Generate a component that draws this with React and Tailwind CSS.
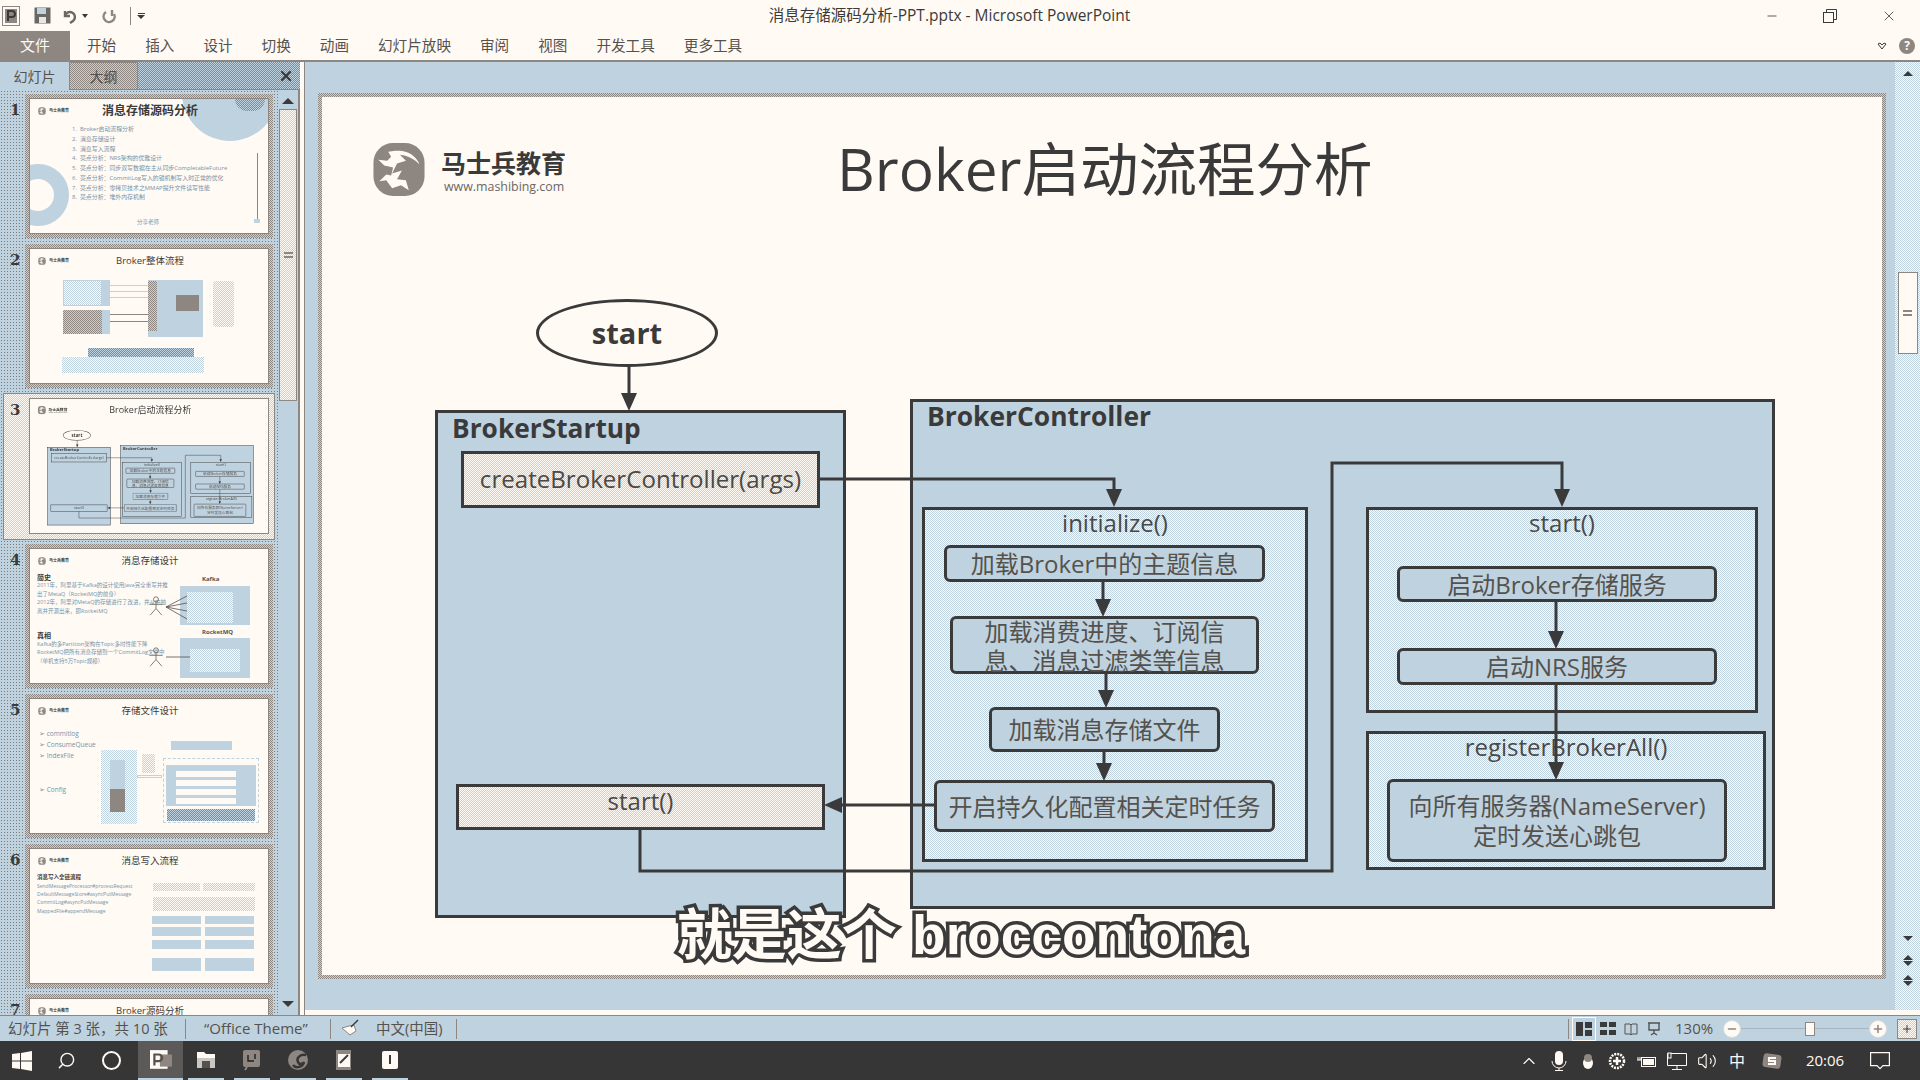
import React from "react";
import { Minus, Plus, X, Search, ChevronUp, Volume2 } from "lucide-react";

const LIGHT = "bg-[repeating-conic-gradient(#bfd2e0_0_25%,#fffaf4_0_50%)] bg-[length:2px_2px]";
const GRAY = "bg-[repeating-conic-gradient(#8e8680_0_25%,#bfd2e0_0_50%)] bg-[length:2px_2px]";
const SPARSE = "bg-[radial-gradient(#7f7a76_0.6px,transparent_0.8px)] bg-[length:3px_3px]";
const BOX = "absolute flex items-center justify-center text-center border-[3px] border-[#3a3a3a] rounded-[6px] bg-[#bfd2e0] text-[24px] leading-[29px] text-[#55524e]";
const SQ = "absolute flex items-center justify-center border-[3px] border-[#3a3a3a]";

function Logo({ className }) {
  return (
    <svg viewBox="0 0 54 56" className={className}>
      <rect x="1" y="1" width="52" height="54" rx="20" fill="#8e8680" />
      <path d="M27 9c9 0 17 5 21 14-5-5-11-9-20-10l6 6-9 3-5 10 10-3-5 9 9 1 3 10-8-5-9 3-6-8-7 1 7-7 5 1 2-8-9-2-6-6 9 1 4-4-3-5 7-1z" fill="#fffaf4" />
    </svg>
  );
}

function Arrow({ x, y, dir }) {
  if (dir === "left") return <polygon points={`${x},${y} ${x + 18},${y - 8} ${x + 18},${y + 8}`} fill="#3a3a3a" stroke="none" />;
  return <polygon points={`${x},${y} ${x - 8},${y - 18} ${x + 8},${y - 18}`} fill="#3a3a3a" stroke="none" />;
}

function SlideContent() {
  return (
    <>
      <Logo className="absolute left-[50px] top-[45px] w-[54px] h-[55px]" />
      <div className="absolute left-[119px] top-[48px] text-[25px] leading-[36px] font-bold text-[#3a3a3a] whitespace-nowrap">马士兵教育</div>
      <div className="absolute left-[122px] top-[81px] text-[12.4px] leading-[17px] text-[#6b6763] whitespace-nowrap">www.mashibing.com</div>
      <div className="absolute left-[515px] top-[30px] text-[58.5px] leading-[82px] text-[#3a3a3a] whitespace-nowrap">Broker启动流程分析</div>

      <div className="absolute left-[214px] top-[202px] w-[182px] h-[68px] rounded-[50%] border-[3px] border-[#3a3a3a] flex items-center justify-center text-[29px] font-bold text-[#3a3a3a]">start</div>

      <div className="absolute left-[113px] top-[313px] w-[411px] h-[508px] border-[3px] border-[#3a3a3a] bg-[#bfd2e0]" />
      <div className="absolute left-[130px] top-[312px] text-[26.3px] leading-[38px] font-bold text-[#3a3a3a]">BrokerStartup</div>
      <div className={`${SQ} ${LIGHT} left-[139px] top-[354px] w-[359px] h-[57px] text-[24.1px] text-[#4b4946]`}>createBrokerController(args)</div>
      <div className={`${SQ} ${LIGHT} left-[134px] top-[687px] w-[369px] h-[46px] text-[24px] text-[#4b4946] pb-[12px]`}>start()</div>

      <div className="absolute left-[588px] top-[302px] w-[865px] h-[510px] border-[3px] border-[#3a3a3a] bg-[#bfd2e0]" />
      <div className="absolute left-[605px] top-[300px] text-[26.4px] leading-[38px] font-bold text-[#3a3a3a]">BrokerController</div>

      <div className={`${SQ} ${LIGHT} left-[600px] top-[410px] w-[386px] h-[355px] items-start text-[24px] text-[#4b4946] leading-[26px]`}>initialize()</div>
      <div className={`${BOX} left-[622px] top-[448px] w-[321px] h-[37px]`}>加载Broker中的主题信息</div>
      <div className={`${BOX} left-[628px] top-[519px] w-[309px] h-[58px] px-[20px] pt-[2px]`}>加载消费进度、订阅信息、消息过滤类等信息</div>
      <div className={`${BOX} left-[667px] top-[610px] w-[231px] h-[45px]`}>加载消息存储文件</div>
      <div className={`${BOX} left-[612px] top-[683px] w-[341px] h-[52px]`}>开启持久化配置相关定时任务</div>

      <div className={`${SQ} ${LIGHT} left-[1044px] top-[410px] w-[392px] h-[206px] items-start text-[24px] text-[#4b4946] leading-[26px]`}>start()</div>
      <div className={`${BOX} left-[1075px] top-[469px] w-[320px] h-[36px]`}>启动Broker存储服务</div>
      <div className={`${BOX} left-[1075px] top-[551px] w-[320px] h-[37px]`}>启动NRS服务</div>

      <div className={`${SQ} ${LIGHT} left-[1044px] top-[634px] w-[400px] h-[139px] items-start text-[24px] text-[#4b4946] leading-[26px]`}>registerBrokerAll()</div>
      <div className={`${BOX} left-[1065px] top-[682px] w-[340px] h-[83px] leading-[30px]`}>向所有服务器(NameServer)<br />定时发送心跳包</div>

      <svg className="absolute left-0 top-0" width="1560" height="878" fill="none" stroke="#3a3a3a" strokeWidth="3">
        <path d="M307 268V300" />
        <Arrow x={307} y={314} />
        <path d="M497 382H792V395" />
        <Arrow x={792} y={410} />
        <path d="M781 485V505" />
        <Arrow x={781} y={520} />
        <path d="M784 577V595" />
        <Arrow x={784} y={611} />
        <path d="M782 655V672" />
        <Arrow x={782} y={684} />
        <path d="M612 708H518" />
        <Arrow x={502} y={708} dir="left" />
        <path d="M318 731V774H1010V366H1240V395" />
        <Arrow x={1240} y={410} />
        <path d="M1234 505V535" />
        <Arrow x={1234} y={552} />
        <path d="M1234 588V668" />
        <Arrow x={1234} y={683} />
      </svg>
    </>
  );
}

function MiniHead({ title, bold }) {
  return (
    <>
      <Logo className="absolute left-[8px] top-[8px] w-[8px] h-[8px]" />
      <div className="absolute left-[19px] top-[8px] text-[4px] leading-[7px] text-[#3a3a3a] font-bold whitespace-nowrap">马士兵教育</div>
      <div className={`absolute left-0 right-0 top-[4px] pl-[2px] text-center leading-[16px] text-[#3a3a3a] whitespace-nowrap ${bold ? "text-[12px] font-bold" : "text-[9.5px]"}`}>{title}</div>
    </>
  );
}

function Thumb1() {
  const rows = ["Broker启动流程分析", "消息存储设计", "消息写入流程", "亮点分析：NRS架构的优雅设计", "亮点分析：同步双写数据在主从同步CompletableFuture", "亮点分析：CommitLog写入的锁机制写入时正常的优化", "亮点分析：零拷贝技术之MMAP提升文件读写性能", "亮点分析：堆外内存机制"];
  const tops = ["top-[27px]", "top-[37px]", "top-[47px]", "top-[56px]", "top-[66px]", "top-[76px]", "top-[86px]", "top-[95px]"];
  return (
    <>
      <div className="absolute left-[152px] top-[-54px] w-[96px] h-[96px] rounded-full bg-[#bfd2e0]" />
      <div className={`absolute left-[205px] top-0 w-[30px] h-[12px] rounded-b-full ${GRAY}`} />
      <div className="absolute left-[-23px] top-[65px] w-[62px] h-[62px] rounded-full border-[15px] border-[#bfd2e0]" />
      <MiniHead title="消息存储源码分析" bold />
      {rows.map((r, i) => (
        <div key={r} className={`absolute left-[42px] ${tops[i]} text-[5.9px] leading-[7px] text-[#7593a9] whitespace-nowrap`}>{i + 1}.&nbsp;&nbsp;{r}</div>
      ))}
      <div className="absolute left-[107px] top-[120px] text-[5.5px] leading-[7px] text-[#7593a9]">分享老师</div>
      <div className="absolute left-[227px] top-[54px] w-px h-[67px] bg-[#8e8680]" />
      <div className="absolute left-[224px] top-[120px] w-[6px] h-[4px] bg-[#bfd2e0]" />
    </>
  );
}

function Thumb2() {
  return (
    <>
      <MiniHead title="Broker整体流程" />
      <div className={`absolute left-[33px] top-[31px] w-[39px] h-[26px] border border-[#bfd2e0] ${LIGHT}`} />
      <div className="absolute left-[72px] top-[31px] w-[8px] h-[26px] bg-[#bfd2e0]" />
      <div className={`absolute left-[33px] top-[61px] w-[39px] h-[24px] ${GRAY}`} />
      <div className="absolute left-[72px] top-[61px] w-[8px] h-[24px] bg-[#bfd2e0]" />
      <div className="absolute left-[80px] top-[36px] w-[38px] h-px bg-[#bfd2e0]" />
      <div className="absolute left-[80px] top-[42px] w-[38px] h-px bg-[#bfd2e0]" />
      <div className="absolute left-[80px] top-[48px] w-[38px] h-px bg-[#bfd2e0]" />
      <div className="absolute left-[80px] top-[65px] w-[38px] h-px bg-[#8e8680]" />
      <div className="absolute left-[80px] top-[72px] w-[38px] h-px bg-[#8e8680]" />
      <div className="absolute left-[118px] top-[31px] w-[55px] h-[57px] bg-[#bfd2e0]" />
      <div className={`absolute left-[118px] top-[32px] w-[9px] h-[50px] ${GRAY}`} />
      <div className="absolute left-[146px] top-[46px] w-[23px] h-[16px] bg-[#8e8680]" />
      <div className={`absolute left-[183px] top-[32px] w-[21px] h-[46px] rounded-[3px] ${LIGHT}`} />
      <div className={`absolute left-[58px] top-[99px] w-[106px] h-[9px] ${GRAY}`} />
      <div className={`absolute left-[32px] top-[108px] w-[142px] h-[16px] ${LIGHT}`} />
    </>
  );
}

function Stick({ className }) {
  return (
    <svg viewBox="0 0 24 24" className={className} fill="none" stroke="#6b6763" strokeWidth="1">
      <circle cx="12" cy="4" r="3" />
      <path d="M12 7V15M4 10H20M12 15L5 23M12 15L19 23" />
    </svg>
  );
}

function Thumb4() {
  const a = ["2011年，阿里基于Kafka的设计使用Java完全重写并推", "出了MetaQ（RocketMQ的前身）", "2012年，阿里对MetaQ的存储进行了改进，并从中抽", "离并开源出来，即RocketMQ"];
  const aT = ["top-[33px]", "top-[42px]", "top-[50px]", "top-[59px]"];
  const b = ["Kafka的多Partition架构在Topic多时性能下降", "RocketMQ把所有消息存储到一个CommitLog文件中", "（单机支持5万Topic规模）"];
  const bT = ["top-[92px]", "top-[100px]", "top-[109px]"];
  return (
    <>
      <MiniHead title="消息存储设计" />
      <div className="absolute left-[7px] top-[24px] text-[7px] leading-[9px] font-bold text-[#3a3a3a]">简史</div>
      {a.map((t, i) => <div key={t} className={`absolute left-[7px] ${aT[i]} text-[5.5px] leading-[7px] text-[#7593a9] whitespace-nowrap`}>{t}</div>)}
      <div className="absolute left-[7px] top-[82px] text-[7px] leading-[9px] font-bold text-[#3a3a3a]">真相</div>
      {b.map((t, i) => <div key={t} className={`absolute left-[7px] ${bT[i]} text-[5.5px] leading-[7px] text-[#7593a9] whitespace-nowrap`}>{t}</div>)}
      <div className="absolute left-[172px] top-[26px] text-[6px] leading-[8px] font-bold text-[#55524e]">Kafka</div>
      <div className="absolute left-[150px] top-[37px] w-[70px] h-[39px] bg-[#bfd2e0]" />
      <div className={`absolute left-[157px] top-[43px] w-[46px] h-[31px] ${LIGHT}`} />
      <div className="absolute left-[172px] top-[79px] text-[6px] leading-[8px] font-bold text-[#55524e]">RocketMQ</div>
      <div className="absolute left-[150px] top-[89px] w-[70px] h-[40px] bg-[#bfd2e0]" />
      <div className={`absolute left-[160px] top-[100px] w-[50px] h-[23px] ${LIGHT}`} />
      <Stick className="absolute left-[116px] top-[46px] w-[20px] h-[22px]" />
      <Stick className="absolute left-[116px] top-[97px] w-[20px] h-[22px]" />
      <svg className="absolute left-0 top-0" width="240" height="136" stroke="#55524e" strokeWidth="0.8">
        <path d="M136 58L157 47M136 58L157 54M136 58L157 62M136 58L157 70M136 108L160 108" />
      </svg>
    </>
  );
}

function Thumb5() {
  const l = ["commitlog", "ConsumeQueue", "IndexFile"];
  const t = ["top-[31px]", "top-[42px]", "top-[53px]"];
  const rows = ["top-[72px]", "top-[81px]", "top-[90px]", "top-[99px]"];
  return (
    <>
      <MiniHead title="存储文件设计" />
      {l.map((x, i) => <div key={x} className={`absolute left-[9px] ${t[i]} text-[6.5px] leading-[8px] text-[#7593a9] whitespace-nowrap`}>➢&nbsp;{x}</div>)}
      <div className="absolute left-[9px] top-[87px] text-[6.5px] leading-[8px] text-[#7593a9]">➢&nbsp;Config</div>
      <div className={`absolute left-[71px] top-[51px] w-[36px] h-[74px] ${LIGHT}`} />
      <div className="absolute left-[80px] top-[61px] w-[15px] h-[29px] bg-[#bfd2e0]" />
      <div className="absolute left-[80px] top-[90px] w-[15px] h-[23px] bg-[#8e8680]" />
      <div className={`absolute left-[112px] top-[55px] w-[13px] h-[19px] ${LIGHT}`} />
      <div className="absolute left-[107px] top-[76px] w-[25px] h-[3px] border border-[#bfd2e0]" />
      <div className="absolute left-[141px] top-[42px] w-[61px] h-[9px] bg-[#bfd2e0]" />
      <div className="absolute left-[133px] top-[59px] w-[96px] h-[65px] border border-dashed border-[#bfd2e0]" />
      <div className="absolute left-[136px] top-[66px] w-[90px] h-[41px] bg-[#bfd2e0]" />
      {rows.map((r) => <div key={r} className={`absolute left-[146px] ${r} w-[60px] h-[6px] bg-[#fffaf4]`} />)}
      <div className={`absolute left-[137px] top-[110px] w-[88px] h-[12px] ${GRAY}`} />
    </>
  );
}

function Thumb6() {
  const cells = ["left-[122px] top-[67px] h-[8px]", "left-[175px] top-[67px] h-[8px]", "left-[122px] top-[78px] h-[9px]", "left-[175px] top-[78px] h-[9px]", "left-[122px] top-[91px] h-[9px]", "left-[175px] top-[91px] h-[9px]", "left-[122px] top-[109px] h-[13px]", "left-[175px] top-[109px] h-[13px]"];
  const l = ["SendMessageProcessor#processRequest", "DefaultMessageStore#asyncPutMessage", "CommitLog#asyncPutMessage", "MappedFile#appendMessage"];
  const t = ["top-[34px]", "top-[42px]", "top-[50px]", "top-[59px]"];
  return (
    <>
      <MiniHead title="消息写入流程" />
      <div className="absolute left-[7px] top-[25px] text-[5.5px] leading-[7px] font-bold text-[#3a3a3a]">消息写入全链流程</div>
      {l.map((x, i) => <div key={x} className={`absolute left-[7px] ${t[i]} text-[5px] leading-[7px] text-[#7593a9] whitespace-nowrap`}>{x}</div>)}
      <div className={`absolute left-[123px] top-[34px] w-[47px] h-[8px] ${LIGHT}`} />
      <div className={`absolute left-[173px] top-[34px] w-[52px] h-[8px] ${LIGHT}`} />
      <div className={`absolute left-[123px] top-[48px] w-[102px] h-[14px] ${LIGHT}`} />
      {cells.map((c) => <div key={c} className={`absolute ${c} w-[49px] bg-[#bfd2e0]`} />)}
    </>
  );
}

function Thumb3() {
  return (
    <div className="relative w-[1560px] h-[878px] origin-top-left scale-[0.1538]">
      <SlideContent />
    </div>
  );
}

function ThumbRow({ n, selected, children }) {
  return (
    <div className="relative flex h-[150px] shrink-0">
      {selected && <div className={`absolute left-[3px] top-[-5px] w-[272px] h-[147px] border border-[#8e8680] ${LIGHT}`} />}
      <div className="relative w-[25px] pl-[10px] text-[15px] leading-[20px] pt-[2px] font-bold text-[#3a3a3a] font-['DejaVu_Serif',serif]">{n}</div>
      <div className={`relative w-[248px] h-[144px] p-[4px] -mt-[4px] ${selected ? "" : GRAY}`}>
        <div className="relative w-[240px] h-[136px] bg-[#fffaf4] border border-[#8e8680] overflow-hidden">{children}</div>
      </div>
    </div>
  );
}

function Sidebar() {
  return (
    <div className="w-[300px] shrink-0 flex flex-col bg-[#bfd2e0] overflow-hidden">
      <div className="flex h-[28px] shrink-0">
        <div className="w-[69px] flex items-center justify-center text-[14px] text-[#55524e]">幻灯片</div>
        <div className={`w-[69px] flex items-center justify-center text-[14px] text-[#55524e] border border-[#8e8680] ${GRAY}`}>大纲</div>
        <div className={`flex-1 flex items-center justify-end pr-[6px] border-b border-[#8e8680] ${GRAY}`}>
          <X size={16} strokeWidth={3.2} className="text-[#3a3a3a]" />
        </div>
      </div>
      <div className="flex flex-1 min-h-0">
        <div className={`w-[278px] pt-[8px] flex flex-col overflow-hidden ${SPARSE}`}>
          <ThumbRow n="1"><Thumb1 /></ThumbRow>
          <ThumbRow n="2"><Thumb2 /></ThumbRow>
          <ThumbRow n="3" selected><Thumb3 /></ThumbRow>
          <ThumbRow n="4"><Thumb4 /></ThumbRow>
          <ThumbRow n="5"><Thumb5 /></ThumbRow>
          <ThumbRow n="6"><Thumb6 /></ThumbRow>
          <ThumbRow n="7"><MiniHead title="Broker源码分析" /></ThumbRow>
        </div>
        <div className="w-[22px] flex flex-col items-center pt-[8px] pb-[8px] border-r-2 border-[#8e8680]">
          <div className="w-0 h-0 border-x-[6px] border-x-transparent border-b-[6px] border-b-[#3a3a3a]" />
          <div className={`w-[18px] h-[292px] mt-[5px] border border-[#8e8680] flex items-center justify-center ${LIGHT}`}>
            <div className="w-[9px] h-[6px] border-y-2 border-[#8e8680]" />
          </div>
          <div className="flex-1" />
          <div className="w-0 h-0 border-x-[6px] border-x-transparent border-t-[6px] border-t-[#3a3a3a]" />
        </div>
      </div>
    </div>
  );
}

function Editor() {
  return (
    <div className="flex-1 flex bg-[#bfd2e0] min-h-0">
      <div className="w-[1590px] pl-[13px] pt-[31px]">
        <div className={`w-[1568px] h-[886px] p-[4px] ${GRAY}`}>
          <div className="relative w-[1560px] h-[878px] bg-[#fffaf4] overflow-hidden">
            <SlideContent />
          </div>
        </div>
      </div>
      <div className={`w-[25px] flex flex-col items-center pt-[9px] pb-[24px] ${LIGHT}`}>
        <div className="w-0 h-0 border-x-[5px] border-x-transparent border-b-[5px] border-b-[#3a3a3a]" />
        <div className="w-[20px] h-[82px] mt-[196px] bg-[#fffaf4] border border-[#8e8680] flex items-center justify-center">
          <div className="w-[9px] h-[6px] border-y-2 border-[#8e8680]" />
        </div>
        <div className="flex-1" />
        <div className="w-0 h-0 border-x-[5px] border-x-transparent border-t-[5px] border-t-[#3a3a3a]" />
        <div className="mt-[14px] w-0 h-0 border-x-[5px] border-x-transparent border-b-[5px] border-b-[#3a3a3a]" />
        <div className="w-0 h-0 border-x-[5px] border-x-transparent border-t-[5px] border-t-[#3a3a3a] mt-px" />
        <div className="mt-[9px] w-0 h-0 border-x-[5px] border-x-transparent border-b-[5px] border-b-[#3a3a3a]" />
        <div className="w-0 h-0 border-x-[5px] border-x-transparent border-t-[5px] border-t-[#3a3a3a] mt-px" />
      </div>
    </div>
  );
}

function TitleBar() {
  return (
    <div className="h-[31px] shrink-0 flex items-center">
      <div className="flex-1 flex items-center pl-[2px] gap-[14px]">
        <svg width="18" height="20" viewBox="0 0 18 20"><rect x="0.5" y="0.5" width="17" height="19" fill="#fffaf4" stroke="#8e8680" /><rect x="3" y="3" width="12" height="14" fill="#8e8680" /><path d="M6 15V5h4a3 3 0 010 6H6" fill="none" stroke="#3a3a3a" strokeWidth="2" /></svg>
        <svg width="17" height="17" viewBox="0 0 17 17"><rect x="0.5" y="0.5" width="16" height="16" fill="#6b6763" /><rect x="3" y="1" width="9" height="6" fill="#bfd2e0" /><rect x="5" y="10" width="7" height="6" fill="#e6e6e6" /></svg>
        <div className="flex items-center gap-[6px] -ml-[3px]">
          <svg width="14" height="16" viewBox="0 0 14 16" fill="none" stroke="#6b6763" strokeWidth="2.4"><path d="M3 3v5h5" /><path d="M3 8a5 5 0 118 5l-3 2" /></svg>
          <div className="w-0 h-0 border-x-[3px] border-x-transparent border-t-[4px] border-t-[#3a3a3a]" />
        </div>
        <svg width="14" height="16" viewBox="0 0 14 16" fill="none" stroke="#8e8680" strokeWidth="2.4"><path d="M10 2v6" /><path d="M4 4a5.5 5.5 0 108 2" /></svg>
        <div className="w-px h-[18px] bg-[#8e8680] -mr-[8px]" />
        <div className="flex flex-col items-center">
          <div className="w-[7px] h-px bg-[#3a3a3a] mb-px" />
          <div className="w-0 h-0 border-x-[4px] border-x-transparent border-t-[4px] border-t-[#3a3a3a]" />
        </div>
      </div>
      <div className="text-[15.5px] text-[#3a3a3a] whitespace-nowrap">消息存储源码分析-PPT.pptx - Microsoft PowerPoint</div>
      <div className="flex-1 flex justify-end items-center pr-[23px] gap-[44px]">
        <Minus size={14} strokeWidth={1.4} className="text-[#3a3a3a]" />
        <svg width="14" height="14" viewBox="0 0 14 14" fill="none" stroke="#3a3a3a"><rect x="0.5" y="3.5" width="10" height="10" /><path d="M3.5 3.5V0.5H13.5V10.5H10.5" /></svg>
        <X size={16} strokeWidth={1.2} className="text-[#3a3a3a]" />
      </div>
    </div>
  );
}

function Ribbon() {
  const tabs = ["开始", "插入", "设计", "切换", "动画", "幻灯片放映", "审阅", "视图", "开发工具", "更多工具"];
  return (
    <div className="h-[31px] shrink-0 flex items-center border-b-2 border-[#8e8680]">
      <div className="w-[70px] h-full flex items-center justify-center bg-[#8e8680] text-[#fffaf4] text-[15px]">文件</div>
      <div className="flex items-center gap-[29px] ml-[17px] text-[14.6px] text-[#55524e] flex-1">
        {tabs.map((t) => <span key={t}>{t}</span>)}
      </div>
      <div className="flex items-center gap-[12px] pr-[5px]">
        <svg width="10" height="8" viewBox="0 0 10 8" fill="none" stroke="#3a3a3a"><path d="M1 2l4 5 4-5-2-1-2 2-2-2z" /></svg>
        <div className="w-[16px] h-[16px] rounded-full bg-[#8e8680] text-[#fffaf4] text-[12px] leading-[16px] text-center font-bold">?</div>
      </div>
    </div>
  );
}

function StatusBar() {
  return (
    <div className="h-[26px] shrink-0 flex items-center bg-[#bfd2e0] text-[14.5px] text-[#55524e] border-t border-[#8e8680]">
      <div className="pl-[8px] w-[185px] whitespace-nowrap">幻灯片 第 3 张，共 10 张</div>
      <div className="w-px h-[20px] bg-[#8e8680]" />
      <div className="pl-[18px] w-[144px] whitespace-nowrap text-[15px]">“Office Theme”</div>
      <div className="w-px h-[20px] bg-[#8e8680]" />
      <div className="pl-[8px] w-[45px]">
        <svg width="22" height="20" viewBox="0 0 22 20"><path d="M3 9l8 7 6-4-2-6-5 1z" fill="#fffaf4" stroke="#8e8680" /><path d="M12 8l7-7" stroke="#3a3a3a" strokeWidth="1.5" /></svg>
      </div>
      <div className="w-[80px] whitespace-nowrap">中文(中国)</div>
      <div className="w-px h-[20px] bg-[#8e8680]" />
      <div className="flex-1" />
      <div className="w-px h-[20px] bg-[#8e8680] mr-[3px]" />
      <div className="w-[24px] h-[24px] border border-[#fffaf4] flex items-center justify-center">
        <svg width="16" height="14" viewBox="0 0 16 14" fill="#3a3a3a"><path d="M0 0h7v14H0zM9 0h7v6H9zM9 8h7v6H9z" /></svg>
      </div>
      <svg className="ml-[4px]" width="16" height="14" viewBox="0 0 16 14" fill="#3a3a3a"><path d="M0 0h7v5H0zM9 0h7v5H9zM0 8h7v5H0zM9 8h7v5H9z" /></svg>
      <svg className="ml-[8px]" width="14" height="14" viewBox="0 0 14 14" fill="none" stroke="#55524e"><path d="M1 2h5l1 1 1-1h5v10H8l-1 1-1-1H1zM7 3v10" /></svg>
      <svg className="ml-[9px]" width="14" height="14" viewBox="0 0 14 14" fill="none" stroke="#55524e" strokeWidth="1.4"><path d="M1 1h12M2 1v7h10V1M7 8v3M4 13l3-2 3 2" /></svg>
      <div className="ml-[14px] w-[40px] text-[15px] whitespace-nowrap">130%</div>
      <div className="ml-[8px] w-[18px] h-[18px] rounded-full bg-[#fffaf4] border border-[#d9dcdc] flex items-center justify-center"><Minus size={12} strokeWidth={3} className="text-[#8e8680]" /></div>
      <div className="relative w-[128px] h-[18px] flex items-center">
        <div className="w-full h-px bg-[#a9b5bd]" />
        <div className="absolute left-[64px] top-[2px] w-[10px] h-[14px] bg-[#fffaf4] border border-[#8e8680]" />
      </div>
      <div className="w-[18px] h-[18px] rounded-full bg-[#fffaf4] border border-[#d9dcdc] flex items-center justify-center"><Plus size={12} strokeWidth={3} className="text-[#8e8680]" /></div>
      <div className={`ml-[10px] mr-[3px] w-[20px] h-[20px] border border-[#8e8680] flex items-center justify-center ${LIGHT}`}><Plus size={12} className="text-[#3a3a3a]" /></div>
    </div>
  );
}

function TaskApp({ active, bar, children }) {
  return (
    <div className={`h-full flex flex-col items-center ${active ? "w-[45px] bg-[#5c5a58]" : "w-[36px] mx-[5px]"}`}>
      <div className="flex-1 flex items-center justify-center">{children}</div>
      <div className={`h-[2px] w-full ${bar}`} />
    </div>
  );
}

function Taskbar() {
  return (
    <div className="h-[39px] shrink-0 bg-[#363636] flex items-center text-[#fffaf4]">
      <svg className="ml-[12px]" width="20" height="20" viewBox="0 0 20 20" fill="#fffaf4"><path d="M0 3l8-1v7.5H0zM9 2l11-2v9.5H9zM0 10.5h8V18l-8-1zM9 10.5h11V20L9 18z" /></svg>
      <Search size={19} strokeWidth={1.8} className="ml-[25px] -scale-x-100" />
      <div className="ml-[26px] w-[19px] h-[19px] rounded-full border-[2.5px] border-[#fffaf4]" />
      <div className="ml-[17px] h-full flex items-center">
        <TaskApp active bar="bg-[#bfd2e0]">
          <svg width="22" height="22" viewBox="0 0 20 20"><rect x="0" y="1" width="16" height="17" fill="#fffaf4" /><rect x="9" y="5" width="11" height="11" fill="#8e8680" /><path d="M4 15V5h4a3 3 0 010 6H4" fill="none" stroke="#55524e" strokeWidth="2" /></svg>
        </TaskApp>
        <TaskApp bar="bg-[#bfd2e0]">
          <svg width="20" height="18" viewBox="0 0 20 18"><path d="M1 1h7l2 2h9v4H1z" fill="#fffaf4" /><rect x="1" y="7" width="18" height="10" fill="#c9c6c3" /><rect x="6" y="10" width="8" height="7" fill="#55524e" /></svg>
        </TaskApp>
        <TaskApp bar="bg-[#bfd2e0]">
          <svg width="20" height="22" viewBox="0 0 20 22"><rect x="1" y="1" width="17" height="17" rx="2" fill="#8e8680" /><path d="M6 6v6h6M13 5v5" stroke="#1f1f1f" strokeWidth="1.4" fill="none" /><path d="M5 18l-2 3" stroke="#8e8680" strokeWidth="2" /></svg>
        </TaskApp>
        <TaskApp bar="bg-[#bfd2e0]">
          <svg width="20" height="20" viewBox="0 0 20 20"><circle cx="10" cy="10" r="10" fill="#8e8680" /><path d="M18 5C12 4 8 8 10 12c1 3 5 2 6 0-1 5-8 7-11 3" fill="none" stroke="#363636" strokeWidth="2.5" /></svg>
        </TaskApp>
        <TaskApp bar="bg-[#bfd2e0]">
          <svg width="18" height="22" viewBox="0 0 18 22"><rect x="1" y="1" width="15" height="20" fill="#8e8680" /><rect x="3" y="5" width="12" height="13" fill="#fffaf4" /><path d="M5 14L13 6" stroke="#3a3a3a" strokeWidth="2" /></svg>
        </TaskApp>
        <TaskApp bar="bg-[#bfd2e0]">
          <svg width="18" height="20" viewBox="0 0 18 20"><rect x="1" y="1" width="16" height="18" rx="2" fill="#fffaf4" /><path d="M9 5v9" stroke="#3a3a3a" strokeWidth="2" /></svg>
        </TaskApp>
      </div>
      <div className="flex-1" />
      <ChevronUp size={20} strokeWidth={1.4} className="mr-[12px]" />
      <svg className="mr-[14px]" width="16" height="20" viewBox="0 0 16 20"><rect x="4" y="0" width="8" height="14" rx="4" fill="#fffaf4" /><path d="M1 10a7 7 0 0014 0M8 17v2M4 19.5h8" fill="none" stroke="#fffaf4" /></svg>
      <svg className="mr-[12px]" width="14" height="20" viewBox="0 0 14 20"><ellipse cx="7" cy="12" rx="5" ry="6" fill="#fffaf4" /><ellipse cx="7" cy="7" rx="4" ry="4" fill="#8e8680" /></svg>
      <svg className="mr-[10px]" width="20" height="20" viewBox="0 0 20 20" fill="none" stroke="#fffaf4" strokeWidth="2.5" strokeDasharray="2 1"><circle cx="10" cy="10" r="7" /><path d="M6 10h8M10 6v8" strokeDasharray="none" /></svg>
      <svg className="mr-[10px]" width="20" height="14" viewBox="0 0 20 14" fill="none" stroke="#fffaf4"><rect x="4.5" y="3.5" width="14" height="9" /><rect x="6" y="5" width="11" height="6" fill="#fffaf4" stroke="none" /><path d="M0 6h4M1 3v3M3 3v3" /></svg>
      <svg className="mr-[10px]" width="20" height="20" viewBox="0 0 20 20" fill="none" stroke="#fffaf4"><path d="M0.5 2.5h19v12h-19zM10 15v3M5 18.5h10" /><rect x="1" y="2" width="3" height="5" fill="#363636" /></svg>
      <Volume2 size={20} strokeWidth={1.3} className="mr-[12px]" />
      <div className="mr-[17px] text-[16px] leading-[20px]">中</div>
      <svg className="mr-[13px]" width="20" height="18" viewBox="0 0 20 18"><rect x="1" y="2" width="18" height="14" rx="3" fill="#8e8680" transform="rotate(8 10 9)" /><path d="M14 6H7v3h6v3H6" fill="none" stroke="#fffaf4" strokeWidth="2" /></svg>
      <div className="w-[60px] text-center text-[15px] whitespace-nowrap">20:06</div>
      <svg className="ml-[15px] mr-[30px]" width="20" height="18" viewBox="0 0 20 18" fill="none" stroke="#fffaf4" strokeWidth="1.2"><path d="M0.6 0.6h18.8v13H13l-3 3-3-3H0.6z" /></svg>
    </div>
  );
}

export default function App() {
  return (
    <div className="relative w-[1920px] h-[1080px] flex flex-col overflow-hidden bg-[#fffaf4] font-['Open_Sans','Noto_Sans_CJK_SC',sans-serif]">
      <TitleBar />
      <Ribbon />
      <div className="flex h-[953px] shrink-0 min-h-0">
        <Sidebar />
        <div className="w-[5px] bg-[#fffaf4] border-r border-[#8e8680]" />
        <div className="flex-1 flex flex-col min-w-0">
          <Editor />
          <div className="h-[5px] shrink-0 bg-[#fffaf4]" />
        </div>
      </div>
      <StatusBar />
      <Taskbar />
      <div className="absolute left-[671px] top-[895px] w-[580px] text-center text-[55px] leading-[80px] font-bold text-[#fffaf4] whitespace-nowrap font-['Liberation_Sans','Noto_Sans_CJK_SC',sans-serif] [-webkit-text-stroke:7px_#3a3a3a] [paint-order:stroke_fill]">就是这个 broccontona</div>
    </div>
  );
}
